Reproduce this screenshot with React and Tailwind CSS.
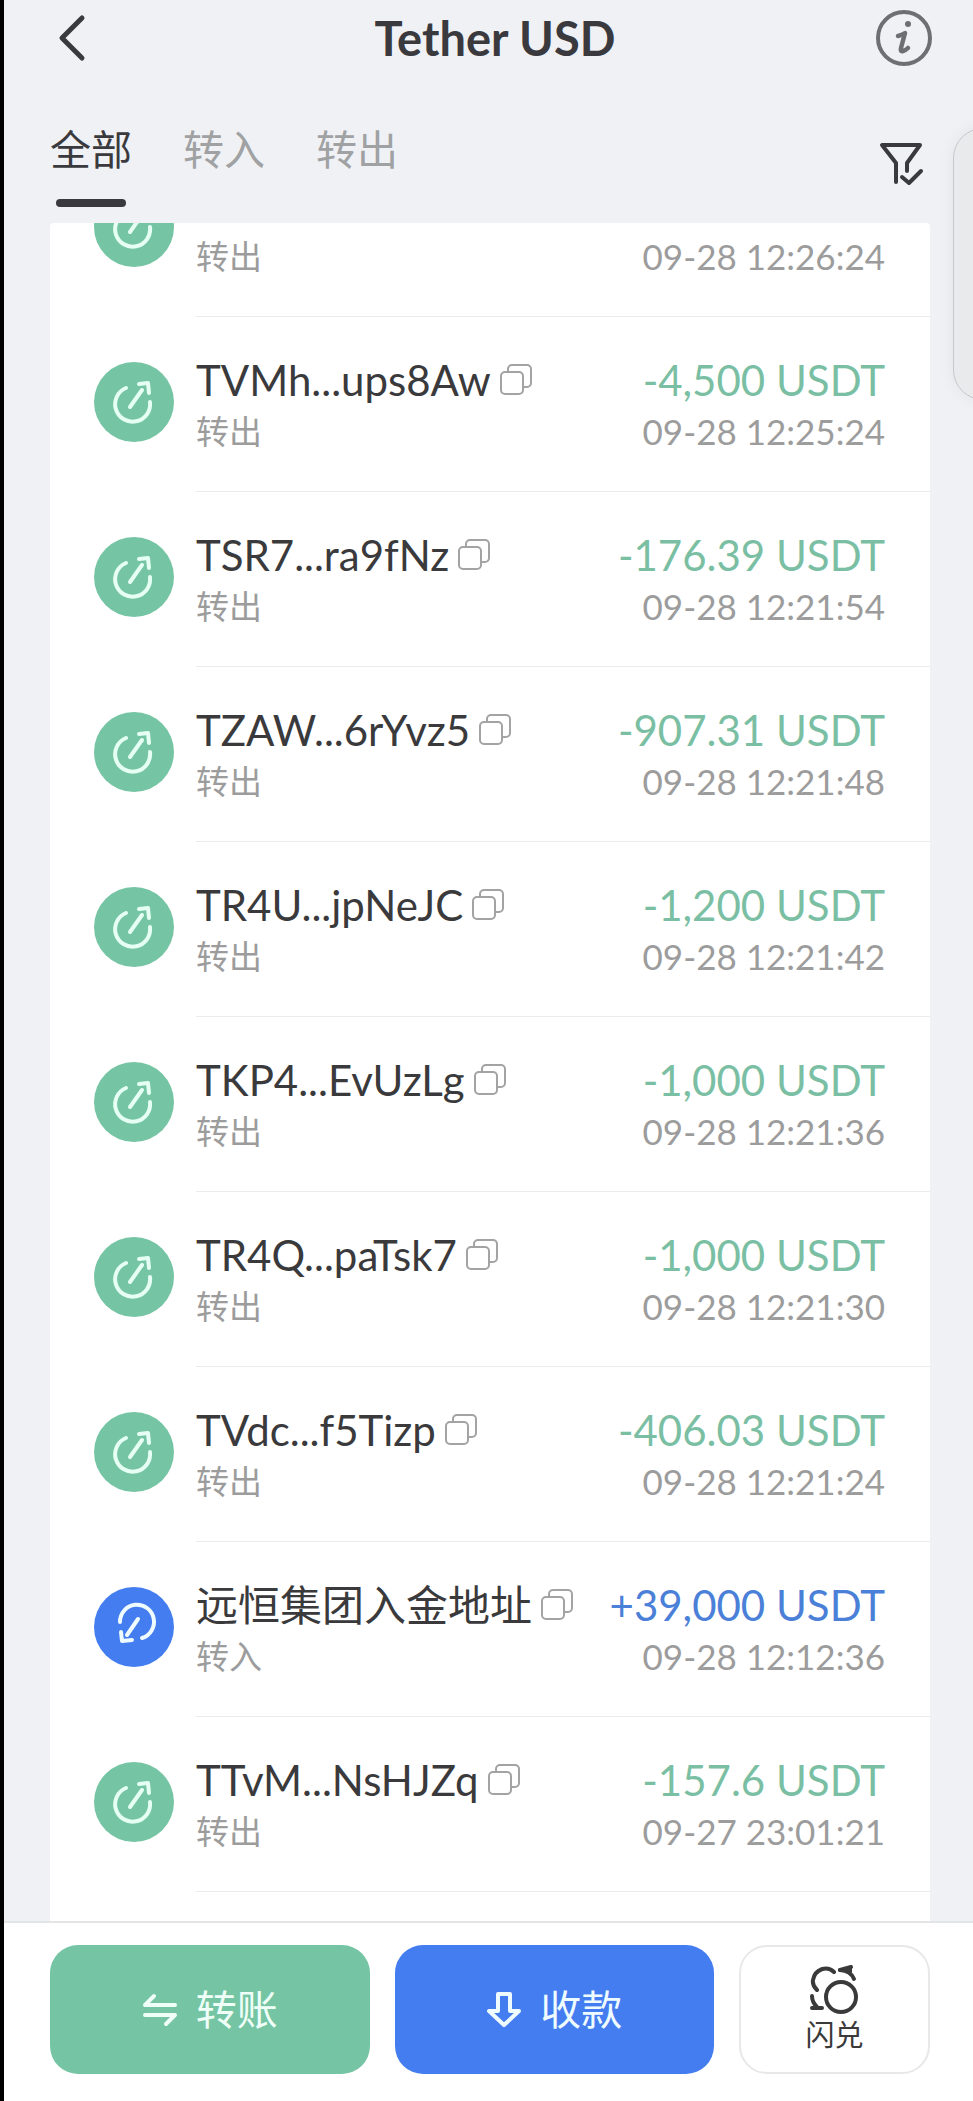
import { useState } from "react";
import clsx from "clsx";

const TABS = ["全部", "转入", "转出"];

const RECORDS = [
  { id: 1, type: "out", name: "", amount: "", time: "09-28 12:26:24" },
  { id: 2, type: "out", name: "TVMh...ups8Aw", amount: "-4,500 USDT", time: "09-28 12:25:24" },
  { id: 3, type: "out", name: "TSR7...ra9fNz", amount: "-176.39 USDT", time: "09-28 12:21:54" },
  { id: 4, type: "out", name: "TZAW...6rYvz5", amount: "-907.31 USDT", time: "09-28 12:21:48" },
  { id: 5, type: "out", name: "TR4U...jpNeJC", amount: "-1,200 USDT", time: "09-28 12:21:42" },
  { id: 6, type: "out", name: "TKP4...EvUzLg", amount: "-1,000 USDT", time: "09-28 12:21:36" },
  { id: 7, type: "out", name: "TR4Q...paTsk7", amount: "-1,000 USDT", time: "09-28 12:21:30" },
  { id: 8, type: "out", name: "TVdc...f5Tizp", amount: "-406.03 USDT", time: "09-28 12:21:24" },
  { id: 9, type: "in", name: "远恒集团入金地址", amount: "+39,000 USDT", time: "09-28 12:12:36" },
  { id: 10, type: "out", name: "TTvM...NsHJZq", amount: "-157.6 USDT", time: "09-27 23:01:21" },
];

function Icon({ width, height, stroke = 4, className, children }) {
  return (
    <svg
      width={width}
      height={height}
      viewBox={`0 0 ${width} ${height}`}
      fill="none"
      stroke="currentColor"
      strokeWidth={stroke}
      strokeLinecap="round"
      strokeLinejoin="round"
      className={clsx("shrink-0", className)}
      aria-hidden="true"
    >
      {children}
    </svg>
  );
}

function BackIcon() {
  return (
    <Icon width={28} height={48} stroke={5}>
      <path d="M24 4 4 24l20 20" />
    </Icon>
  );
}

function InfoIcon() {
  return (
    <Icon width={56} height={56} className="text-[#6d6f73]">
      <circle cx="28" cy="28" r="26" />
      <circle cx="32" cy="14" r="3" fill="currentColor" stroke="none" />
      <path d="M22 26q4-1 7-3l-4 15q-1 4 2 3 3-1 5-3" strokeWidth="4.5" />
    </Icon>
  );
}

function FilterIcon() {
  return (
    <Icon width={48} height={48}>
      <path d="M18 42V23L4 5h38L29 23v8" />
      <path d="m24 37 7 6 12-12" />
    </Icon>
  );
}

function CopyIcon() {
  return (
    <Icon width={34} height={34} stroke={2} className="text-[#a3a3a3]">
      <rect x="2" y="9" width="22" height="22" rx="4" />
      <path d="M9 9V6a4 4 0 0 1 4-4h15a4 4 0 0 1 4 4v14a4 4 0 0 1-4 4h-4" />
    </Icon>
  );
}

function TypeIcon({ type }) {
  if (type === "in") {
    return (
      <Icon width={80} height={80} className="rounded-full bg-[#447df0] text-[#effcff]">
        <path d="M26 35a17 17 0 1 1 22 16" />
        <path d="M44 32 33 48" />
        <path d="m27 45 1 9 10-1" />
      </Icon>
    );
  }
  return (
    <Icon width={80} height={80} className="rounded-full bg-[#75c5a4] text-[#e6fff4]">
      <path d="M32 26a17.5 17.5 0 1 0 24 14" />
      <path d="m36 45 12-17" />
      <path d="m45 22 9-1 1 10" />
    </Icon>
  );
}

function RecordRow({ record }) {
  const isIn = record.type === "in";
  return (
    <li className="flex h-[175px] shrink-0 pl-[44px]">
      <div className="mt-[45px]">
        <TypeIcon type={record.type} />
      </div>
      <div className="ml-[22px] flex min-w-0 flex-1 justify-between border-b border-[#ebebeb] pt-[37px] pr-[45px]">
        <div>
          <div className="flex h-[52px] items-center gap-2">
            <span className="text-[42px] leading-[52px] text-[#3a3a3c]">{record.name}</span>
            {record.name && (
              <button type="button" aria-label="复制地址">
                <CopyIcon />
              </button>
            )}
          </div>
          <p className="text-[33px] leading-[50px] text-[#9c9c9c]">{isIn ? "转入" : "转出"}</p>
        </div>
        <div className="text-right">
          <p className={clsx("h-[52px] text-[42px] leading-[52px]", isIn ? "text-[#4a80d8]" : "text-[#7abfa3]")}>
            {record.amount}
          </p>
          <p className="text-[35px] leading-[50px] text-[#9c9c9c]">{record.time}</p>
        </div>
      </div>
    </li>
  );
}

export default function App() {
  const [tab, setTab] = useState("全部");

  return (
    <div className="relative flex h-screen flex-col overflow-hidden border-l-4 border-black bg-[#eff1f5] font-[Lato,'Noto_Sans_CJK_SC',sans-serif] text-[#3a3a3e]">
      <header className="flex h-[75px] items-center justify-between pr-[41px] pl-[54px]">
        <button type="button" aria-label="返回" className="flex w-[56px]">
          <BackIcon />
        </button>
        <h1 className="text-[47px] leading-[56px] font-bold">Tether USD</h1>
        <button type="button" aria-label="详情">
          <InfoIcon />
        </button>
      </header>

      <nav className="flex h-[148px] items-start justify-between pt-[47px] pr-[47px] pl-[46px]">
        <div className="flex gap-[51px]">
          {TABS.map((item) => (
            <button
              key={item}
              type="button"
              onClick={() => setTab(item)}
              className={clsx(
                "flex flex-col items-center gap-[21px] text-[41px] leading-[56px]",
                item === tab ? "text-[#3a3a3e]" : "text-[#a0a1a3]"
              )}
            >
              {item}
              {item === tab && <span className="h-2 w-[70px] rounded-full bg-[#3a3a3e]" />}
            </button>
          ))}
        </div>
        <button type="button" aria-label="筛选" className="mt-[18px]">
          <FilterIcon />
        </button>
      </nav>

      <main className="mr-[43px] ml-[46px] min-h-0 flex-1 overflow-hidden rounded-t-[4px] bg-white">
        {/* list is scrolled part way into the first record */}
        <ul className="-mt-[81px] flex flex-col">
          {RECORDS.map((record) => (
            <RecordRow key={record.id} record={record} />
          ))}
        </ul>
      </main>

      <footer className="flex h-[180px] gap-[25px] border-t-2 border-[#e3e4e6] bg-white pt-[22px] pr-[43px] pb-[27px] pl-[46px] text-[41px]">
        <button
          type="button"
          className="flex flex-1 items-center justify-center gap-[18px] rounded-[28px] bg-[#75c5a4] text-[#effff8]"
        >
          <Icon width={36} height={34}>
            <path d="m12 3-9 9h30" />
            <path d="M3 22h30l-9 9" />
          </Icon>
          转账
        </button>
        <button
          type="button"
          className="flex flex-1 items-center justify-center gap-[18px] rounded-[28px] bg-[#447df0] text-[#effcff]"
        >
          <Icon width={36} height={38}>
            <path d="M12 3h12v17h9L18 34 3 20h9z" />
          </Icon>
          收款
        </button>
        <button
          type="button"
          className="flex w-[191px] flex-col items-center justify-center rounded-[28px] border-2 border-[#e8e8e8] text-[#3a3a3a]"
        >
          <Icon width={52} height={50}>
            <circle cx="32" cy="32" r="15" />
            <path d="M25 7C18 0 6 4 4 15q-1 5 4 10" />
            <path d="m31 5 11-3" />
            <path d="M31 5q11 1 14 9M41 3v4" />
            <path d="M3 31q0 6 5 11M3 43h10" />
          </Icon>
          <span className="text-[29px] leading-[40px]">闪兑</span>
        </button>
      </footer>

      {/* edge drawer handle, mostly off screen */}
      <div className="absolute top-[128px] -right-[40px] h-[272px] w-[60px] rounded-[40px] border border-[#c6c8cb] bg-[#e9eaec] shadow-[0_0_16px_rgba(0,0,0,0.06)]" />
    </div>
  );
}
